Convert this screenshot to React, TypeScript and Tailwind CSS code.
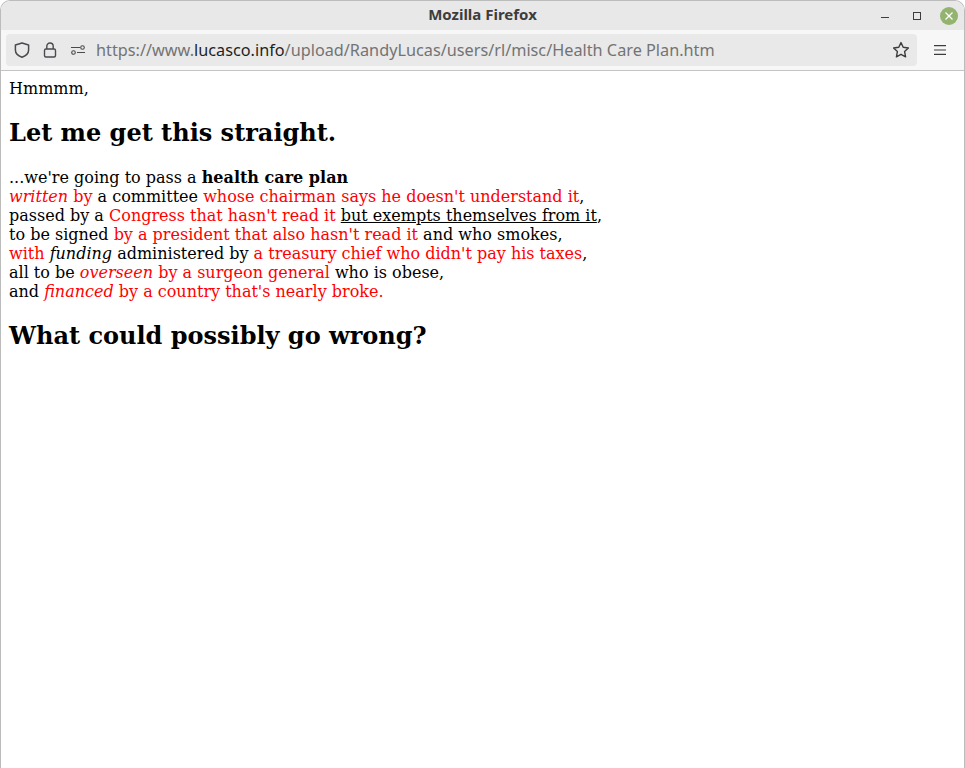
const serif = "font-['DejaVu_Serif',serif]";

function WindowButtons() {
  return (
    <div className="flex items-center justify-end">
      <span className="mr-[24px] mt-[4px] h-[1px] w-[8px] bg-[#3d3d3d]" />
      <span className="mr-[19px] h-[8px] w-[8px] border border-[#3d3d3d]" />
      <span className="mr-[6px] flex h-[18px] w-[18px] items-center justify-center rounded-full bg-[#93b36f]">
        <svg width="10" height="10" viewBox="0 0 10 10" fill="none" stroke="#fff" strokeWidth="1.3">
          <path d="M1.5 1.5l7 7M8.5 1.5l-7 7" />
        </svg>
      </span>
    </div>
  );
}

function ShieldIcon() {
  return (
    <svg width="16" height="16" viewBox="0 0 16 16" fill="none" stroke="#4a4a4f" strokeWidth="1.5" strokeLinejoin="round">
      <path d="M8 1 L14.6 3 V8 C14.6 11.4 11.5 14 8 15.2 C4.5 14 1.4 11.4 1.4 8 V3 Z" />
    </svg>
  );
}

function LockIcon() {
  return (
    <svg width="16" height="16" viewBox="0 0 16 16" fill="none" stroke="#4a4a4f" strokeWidth="1.4">
      <rect x="2.5" y="7" width="11" height="8" rx="1.5" />
      <path d="M4.8 7V4.2a3.2 3.2 0 0 1 6.4 0V7" />
    </svg>
  );
}

function PermissionsIcon() {
  return (
    <svg width="16" height="16" viewBox="0 0 16 16" fill="none" stroke="#4a4a4f" strokeWidth="1.1">
      <circle cx="3.5" cy="10.5" r="1.8" />
      <circle cx="12.5" cy="5.5" r="1.8" />
      <path d="M1 5.5h9M7 10.5h8" />
    </svg>
  );
}

function StarIcon() {
  return (
    <svg width="18" height="18" viewBox="0 0 18 18" fill="none" stroke="#3d3d3d" strokeWidth="1.4" strokeLinejoin="round">
      <path d="M9 1.6 L11.2 6.3 L16.4 7 L12.6 10.6 L13.6 15.8 L9 13.3 L4.4 15.8 L5.4 10.6 L1.6 7 L6.8 6.3 Z" />
    </svg>
  );
}

function MenuIcon() {
  return (
    <svg width="12" height="10" viewBox="0 0 12 10" fill="none" stroke="#3d3d3d" strokeWidth="1.2">
      <path d="M0 .6h12M0 5h12M0 9.4h12" />
    </svg>
  );
}

export default function App() {
  return (
    <div className="flex h-[768px] w-[965px] flex-col overflow-hidden rounded-t-[10px] border border-b-0 border-[#bcbcbc] bg-white">
      <div className="grid h-[29px] shrink-0 grid-cols-[1fr_auto_1fr] items-center bg-[#e8e8e8]">
        <div />
        <div className="pb-[3px] font-['Noto_Sans',sans-serif] text-[15px] font-bold text-[#3d3d3d]">Mozilla Firefox</div>
        <WindowButtons />
      </div>

      <div className="flex h-[41px] shrink-0 items-center border-b border-[#c4c4c4] bg-[#f7f7f7] pl-[5px] pr-[18px]">
        <div className="flex h-[32px] flex-1 items-center rounded-[4px] bg-[#e9e9e9] pl-[8px] pr-[7px]">
          <ShieldIcon />
          <span className="ml-[12px]"><LockIcon /></span>
          <span className="ml-[12px]"><PermissionsIcon /></span>
          <div className="ml-[10px] flex-1 truncate font-['Noto_Sans',sans-serif] text-[16.25px] text-[#737373]">
            https://www.<span className="text-[#1f1f1f]">lucasco.info</span>/upload/RandyLucas/users/rl/misc/Health Care Plan.htm
          </div>
          <StarIcon />
        </div>
        <span className="ml-[17px]"><MenuIcon /></span>
      </div>

      <div className={`${serif} flex-1 bg-white px-[8px] pt-[8px] text-[16px] leading-[19px] text-black`}>
        <p>Hmmmm,</p>
        <h1 className="mt-[21px] text-[24px] font-bold leading-[28px]">Let me get this straight.</h1>
        <p className="mt-[21px]">
          ...we're going to pass a <b>health care plan</b>
          <br />
          <span className="text-[#ff0000]"><i>written</i> by</span> a committee <span className="text-[#ff0000]">whose chairman says he doesn't understand it</span>,
          <br />
          passed by a <span className="text-[#ff0000]">Congress that hasn't read it</span> <u>but exempts themselves from it</u>,
          <br />
          to be signed <span className="text-[#ff0000]">by a president that also hasn't read it</span> and who smokes,
          <br />
          <span className="text-[#ff0000]">with</span> <i>funding</i> administered by <span className="text-[#ff0000]">a treasury chief who didn't pay his taxes</span>,
          <br />
          all to be <span className="text-[#ff0000]"><i>overseen</i> by a surgeon general</span> who is obese,
          <br />
          and <span className="text-[#ff0000]"><i>financed</i> by a country that's nearly broke.</span>
        </p>
        <h1 className="mt-[21px] text-[24px] font-bold leading-[28px]">What could possibly go wrong?</h1>
      </div>
    </div>
  );
}
